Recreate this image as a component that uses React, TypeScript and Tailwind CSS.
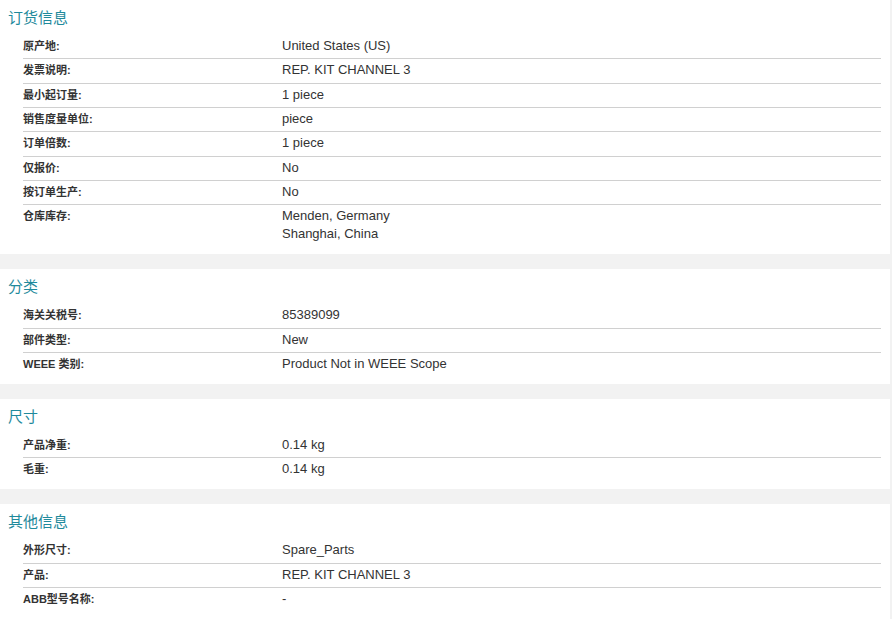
const sections: { title: string; rows: [string, string[]][] }[] = [
  {
    title: "订货信息",
    rows: [
      ["原产地:", ["United States (US)"]],
      ["发票说明:", ["REP. KIT CHANNEL 3"]],
      ["最小起订量:", ["1 piece"]],
      ["销售度量单位:", ["piece"]],
      ["订单倍数:", ["1 piece"]],
      ["仅报价:", ["No"]],
      ["按订单生产:", ["No"]],
      ["仓库库存:", ["Menden, Germany", "Shanghai, China"]],
    ],
  },
  {
    title: "分类",
    rows: [
      ["海关关税号:", ["85389099"]],
      ["部件类型:", ["New"]],
      ["WEEE 类别:", ["Product Not in WEEE Scope"]],
    ],
  },
  {
    title: "尺寸",
    rows: [
      ["产品净重:", ["0.14 kg"]],
      ["毛重:", ["0.14 kg"]],
    ],
  },
  {
    title: "其他信息",
    rows: [
      ["外形尺寸:", ["Spare_Parts"]],
      ["产品:", ["REP. KIT CHANNEL 3"]],
      ["ABB型号名称:", ["-"]],
    ],
  },
];

export default function App() {
  return (
    <div
      className="min-h-screen bg-[#f2f2f2] pr-[2px]"
      style={{ fontFamily: '"Liberation Sans", Arial, "Noto Sans CJK SC", sans-serif' }}
    >
      <div className="flex flex-col gap-[15px]">
        {sections.map((section) => (
          <section key={section.title} className="bg-white pb-[8px]">
            <h3 className="pl-[8px] pt-[7px] pb-[6px] text-[15px] leading-[22px] font-normal text-[#1f8a9c]">
              {section.title}
            </h3>
            <div className="ml-[23px] mr-[9px]">
              {section.rows.map(([label, values], i) => (
                <div
                  key={label}
                  className={
                    i < section.rows.length - 1
                      ? "flex border-b border-[#d0d0d0] pt-[2px] pb-[3.34px]"
                      : "flex pt-[2px] pb-[3px]"
                  }
                >
                  <div className="w-[259px] shrink-0 text-[11px] leading-[18px] font-bold text-[#333333]">
                    {label}
                  </div>
                  <div className="text-[13px] leading-[18px] text-[#333333]">
                    {values.map((v) => (
                      <div key={v}>{v}</div>
                    ))}
                  </div>
                </div>
              ))}
            </div>
          </section>
        ))}
      </div>
    </div>
  );
}
